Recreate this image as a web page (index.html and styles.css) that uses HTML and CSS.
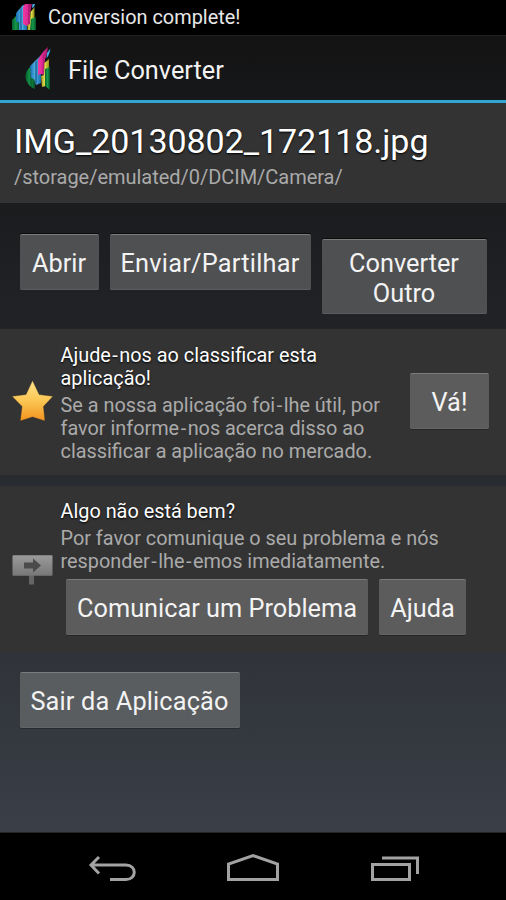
FILE: index.html
```html
<!DOCTYPE html>
<html lang="pt">
<head>
<meta charset="utf-8">
<title>File Converter</title>
<link rel="stylesheet" href="styles.css">
</head>
<body>
<svg class="defs" width="0" height="0" aria-hidden="true">
  <defs>
    <linearGradient id="green" x1="0" x2="1"><stop offset="0" stop-color="#06602f"/><stop offset=".5" stop-color="#159a4c"/><stop offset="1" stop-color="#064d25"/></linearGradient>
    <linearGradient id="blue" x1="0" x2="1"><stop offset="0" stop-color="#1769ad"/><stop offset=".5" stop-color="#52b6e8"/><stop offset="1" stop-color="#1468a8"/></linearGradient>
    <linearGradient id="pink" x1="0" x2="1"><stop offset="0" stop-color="#ed3ba3"/><stop offset=".55" stop-color="#df2790"/><stop offset="1" stop-color="#8e1760"/></linearGradient>
    <linearGradient id="yellow" x1="0" x2="1"><stop offset="0" stop-color="#9c9924"/><stop offset=".5" stop-color="#e9e34b"/><stop offset="1" stop-color="#8f8e1c"/></linearGradient>
    <linearGradient id="gold" x1="0" y1="0" x2="0" y2="1"><stop offset="0" stop-color="#ffe38a"/><stop offset=".5" stop-color="#fcc653"/><stop offset="1" stop-color="#f2921f"/></linearGradient>
    <linearGradient id="board" x1="0" y1="0" x2="0" y2="1"><stop offset="0" stop-color="#9b9b9b"/><stop offset="1" stop-color="#777"/></linearGradient>
    <symbol id="logo" viewBox="0 0 26 44">
      <path fill="url(#green)" d="M5 20 L10 17 V42 Q5 41 1 33 Q-1 26 5 20Z"/>
      <path fill="#0a4520" d="M5 20 L7 18 V40 L5 38Z" opacity=".5"/>
      <path fill="url(#blue)" d="M5 19 L16 8 V36 L11 38 L9 32 L6 31Z"/>
      <path fill="#164f82" d="M10 15 L12 13 V37 L10 36Z" opacity=".6"/>
      <path fill="#3fb0ea" d="M22 6 L25.500 1.500 Q24 9 21.500 11Z"/>
      <path fill="url(#pink)" d="M13 13 Q17 5 23 0 Q22 9 20 12 L19 28 L16 27 L13 28Z"/>
      <path fill="#941966" d="M17.500 8 L19.500 6 L19 28 H17.500Z" opacity=".5"/>
      <path fill="url(#yellow)" d="M19.500 16 L24 12 V38 L17 40 L16 29 L19 28Z"/>
      <path fill="url(#green)" d="M20 22 L25 20 V43 L20 39Z"/>
    </symbol>
  </defs>
</svg>

<div class="phone">
  <header class="status">
    <svg class="status-logo" viewBox="0 0 24 26">
      <path fill="url(#green)" d="M0 16 L5 11 H8 V26 H0Z"/>
      <path fill="url(#blue)" d="M4 9 L11 1 H15 V26 H7 V18 H4Z"/>
      <path fill="#1c5d93" opacity=".65" d="M8 5 L10 3 V26 H8Z"/>
      <path fill="#3fb0ea" d="M20.500 0 H23 L22 3 L20 4Z"/>
      <path fill="url(#pink)" d="M11 3 L13 0 H20 L18 10 V21 L15 22 L11 20Z"/>
      <path fill="#941966" opacity=".5" d="M16 0 H18 L17 21 H16Z"/>
      <path fill="url(#yellow)" d="M18.500 8 L22.500 3 V26 H15.500 V21 L18 20Z"/>
      <path fill="url(#green)" d="M19 15 L24 13 V26 H18Z"/>
    </svg>
    <span class="status-text">Conversion complete!</span>
  </header>

  <div class="action-bar">
    <svg class="bar-logo"><use href="#logo"/></svg>
    <h1 class="bar-title">File Converter</h1>
  </div>

  <main class="content">
    <section class="file panel">
      <h2 class="file-name">IMG_20130802_172118.jpg</h2>
      <p class="file-path">/storage/emulated/0/DCIM/Camera/</p>
    </section>

    <div class="actions">
      <button class="btn open">Abrir</button>
      <button class="btn share">Enviar/Partilhar</button>
      <button class="btn another">Converter<br>Outro</button>
    </div>

    <section class="rate panel">
      <svg class="star" viewBox="0 0 42 42"><path fill="url(#gold)" stroke="#2a2826" stroke-width=".4" stroke-linejoin="round" d="M20.500 .5 L27.200 14.500 L41 16.300 L31.500 26.500 L33 41 L20.500 37 L8.200 41 L10 26.500 L0 16.300 L14 14.500Z"/></svg>
      <div class="rate-copy">
        <h3 class="heading">Ajude<span class="hyphen">-</span>nos ao classificar esta<br>aplicação!</h3>
        <p class="body">Se a nossa aplicação foi<span class="hyphen">-</span>lhe útil, por<br>favor informe<span class="hyphen">-</span>nos acerca disso ao<br>classificar a aplicação no mercado.</p>
      </div>
      <button class="btn go">Vá!</button>
    </section>

    <section class="report panel">
      <svg class="sign" viewBox="0 0 42 30">
        <path fill="#656565" d="M17 20 H22 V29.500 H17Z"/>
        <rect x=".5" y=".2" width="40" height="20.500" rx=".8" fill="url(#board)"/>
        <path fill="#4b4b4b" d="M12 7.500 H21 V3.500 L29 10.500 L21 17.500 V13.500 H12Z"/>
      </svg>
      <div class="report-copy">
        <h3 class="heading">Algo não está bem?</h3>
        <p class="body">Por favor comunique o seu problema e nós<br>responder<span class="hyphen">-</span>lhe<span class="hyphen">-</span>emos imediatamente.</p>
        <div class="report-buttons">
          <button class="btn problem">Comunicar um Problema</button>
          <button class="btn help">Ajuda</button>
        </div>
      </div>
    </section>

    <button class="btn quit">Sair da Aplicação</button>
  </main>

  <nav class="nav">
    <svg class="nav-icons" viewBox="0 0 506 68" fill="none" stroke="#a2a2a2" stroke-width="3">
      <path d="M99 24 L91 32 L99 40.500 M92 32 H126 C137 32 137 46.500 126 46.500 H110"/>
      <path d="M228.500 46.500 V31 L253 22.500 L277.500 31 V46.500Z"/>
      <path d="M372.500 31.500 H409.500 V46.500 H372.500Z M382 25 H417.500 V41"/>
    </svg>
  </nav>
</div>
</body>
</html>
```
FILE: styles.css
```css
* { box-sizing: border-box; }

body, h1, h2, h3, p { margin: 0; font-weight: 400; }

body {
  background: #000;
  color: #fff;
  font-family: Roboto, "Liberation Sans", sans-serif;
}

.defs { display: block; height: 0; }

.phone {
  display: flex;
  flex-direction: column;
  width: 506px;
  height: 900px;
  overflow: hidden;
  white-space: nowrap;
}

.status {
  display: flex;
  align-items: center;
  gap: 12px;
  height: 35px;
  padding-left: 12px;
  background: #000;
}
.status-logo { width: 24px; height: 26px; margin-top: -1px; }
.status-text { font-size: 19.9px; color: #e8e8e8; }

.action-bar {
  display: flex;
  align-items: center;
  gap: 17px;
  height: 68px;
  padding: 1px 0 0 25px;
  border-top: 1px solid #222;
  border-bottom: 3px solid #32a5d3;
  background: linear-gradient(#131313, #17181a);
}
.bar-logo { width: 26px; height: 44px; }
.bar-title { padding-top: 4px; font-size: 25.3px; color: #f3f3f3; }

.content {
  height: 729px;
  background: linear-gradient(#141416 0, #1b1c1e 100px, #212327 226px, #282c30 376px, #303339 550px, #3a3e47 729px);
}

.panel { background: #333; }

.file { height: 100px; padding: 17px 0 0 14px; }
.file-name { font-size: 34px; line-height: 42px; letter-spacing: -.05px; text-shadow: 0 1px 2px #000; }
.file-path { margin-top: 3px; font-size: 20px; line-height: 24px; letter-spacing: -.03px; color: #aaa; }

.actions {
  display: flex;
  align-items: flex-start;
  gap: 11px;
  height: 126px;
  padding: 31px 0 0 19.5px;
}

.btn {
  display: block;
  flex: none;
  height: 56px;
  padding: 2px 0 0;
  border: 0;
  border-top: 1px solid #7b7b7b;
  border-radius: 2px;
  background: #5c5c5c;
  box-shadow: 0 1px 0 rgba(0, 0, 0, .25), inset 0 -1px 0 #646464;
  color: #f3f3f3;
  font: 25.3px/30px Roboto, "Liberation Sans", sans-serif;
  text-align: center;
  white-space: nowrap;
}
.actions .btn {
  background: #4f5051;
  box-shadow: 0 -1px 0 #0b0b0c, inset 0 -1px 0 #5b5c5d;
}
.open { width: 79px; }
.share { width: 201px; letter-spacing: .25px; }
.actions .another { width: 165px; height: 75px; margin-top: 5px; padding-top: 4px; }

.rate {
  display: flex;
  height: 146px;
  padding: 15px 17px 0 12px;
}
.star { width: 42px; height: 42px; margin: 36px 6.5px 0 0; }
.rate-copy { flex: 1; }
.heading { font-size: 19.85px; line-height: 23px; text-shadow: 0 1px 2px #000; }
.body { margin-top: 4px; font-size: 19.85px; line-height: 23px; color: #aaa; }
.hyphen { padding: 0 1.5px; }
.go { width: 79px; margin-top: 29px; }

.report {
  display: flex;
  height: 166px;
  margin-top: 11px;
  padding: 14px 0 0 12px;
}
.sign { width: 42px; height: 30px; margin: 55px 6.5px 0 0; }
.report-buttons { display: flex; gap: 11px; padding: 6px 0 0 5.5px; }
.problem { width: 302px; }
.help { width: 87px; }

.quit { width: 220px; margin: 20px 0 0 19.5px; background: #5a5d60; letter-spacing: .15px; }

.nav { height: 68px; border-top: 1px solid #222428; background: #000; }
.nav-icons { display: block; width: 506px; height: 68px; }
```
